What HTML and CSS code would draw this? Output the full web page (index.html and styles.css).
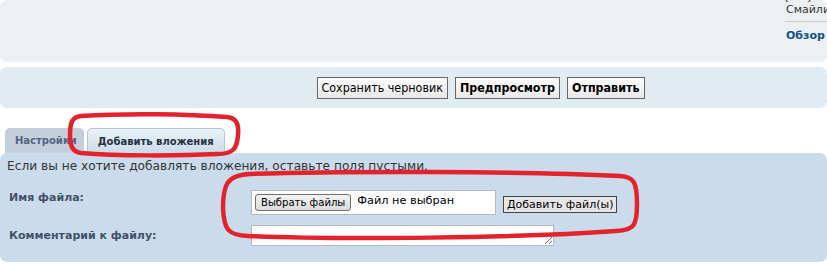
FILE: index.html
```html
<!DOCTYPE html>
<html lang="ru">
<head>
    <meta charset="UTF-8">
    <title>Ответить</title>
    <link rel="stylesheet" href="styles.css">
</head>
<body>
    <div class="panel top-panel">
        <div class="spacer"></div>
        <div class="side-col">
            <div class="cut-line">[ ... ]</div>
            <div class="smilies">Смайлики</div>
            <hr>
            <a href="#" class="review">Обзор</a>
        </div>
    </div>

    <div class="panel submit-panel">
        <input type="button" class="btn" value="Сохранить черновик">
        <input type="button" class="btn btn-bold" value="Предпросмотр">
        <input type="button" class="btn btn-bold" value="Отправить">
    </div>

    <div class="attach-area">
        <ul class="tabs">
            <li class="tab">Настройки</li>
            <li class="tab active">Добавить вложения</li>
        </ul>

        <div class="panel attach-panel">
            <p class="intro">Если вы не хотите добавлять вложения, оставьте поля пустыми.</p>
            <div class="fields">
                <label class="field-label">Имя файла:</label>
                <div class="file-row">
                    <div class="file-box">
                        <span class="file-btn">Выбрать файлы</span>
                        <span class="file-text">Файл не выбран</span>
                    </div>
                    <input type="button" class="add-btn" value="Добавить файл(ы)">
                </div>
                <label class="field-label label-comment">Комментарий к файлу:</label>
                <textarea class="comment" rows="1"></textarea>
            </div>
        </div>

        <!-- red marks drawn over the screenshot -->
        <svg class="mark mark-tab" width="176" height="48" viewBox="0 0 176 48">
            <path d="M14 5 C60 2 120 3 160 6 C170 7 172 14 171 24 C170 38 166 43 150 43 C110 45 50 45 14 42 C5 41 3 34 3 24 C3 12 5 6 14 5 Z" fill="none" stroke="#e3222b" stroke-width="4.5"/>
        </svg>
        <svg class="mark mark-file" width="424" height="76" viewBox="0 0 424 76">
            <path d="M30 6 C120 3 300 3 400 8 C414 9 417 14 417 36 C417 58 414 62 396 63 C300 70 120 72 28 68 C8 67 4 62 3 40 C3 18 6 7 30 6 Z" fill="none" stroke="#e3222b" stroke-width="4.5"/>
        </svg>
    </div>
</body>
</html>
```

FILE: styles.css
```css
html, body {
    overflow: hidden;
}

body {
    margin: 0;
    padding: 0;
    width: 827px;
    background: #fff;
    font-family: "DejaVu Sans", Verdana, sans-serif;
    color: #333;
}

.panel {
    border-radius: 7px;
}

/* top panel with the smilies column */
.top-panel {
    display: flex;
    height: 62px;
    background: #ecf0f3;
    overflow: hidden;
}

.spacer {
    flex: 1;
}

.side-col {
    flex: 0 0 42px;
    min-width: 0;
    white-space: nowrap;
    font-size: 11px;
}

.cut-line {
    margin-top: -10px;
    height: 13px;
    color: #333;
}

.smilies {
    color: #333;
    line-height: 13px;
    padding-left: 1px;
}

.side-col hr {
    margin: 5px 0 0;
    width: 60px;
    border: none;
    border-top: 1px solid #c5ccd2;
}

.review {
    display: block;
    margin-top: 7px;
    padding-left: 1px;
    font-weight: bold;
    color: #105289;
    text-decoration: none;
}

/* submit buttons */
.submit-panel {
    margin-top: 5px;
    height: 41px;
    background: #e1ebf2;
    display: flex;
    justify-content: center;
    align-items: center;
    gap: 7px;
    padding-left: 134px;
}

.btn {
    height: 22px;
    padding: 0 4px;
    border: 1px solid #666;
    border-radius: 0;
    background: linear-gradient(#fdfdfd, #e8e8e8);
    font-family: "DejaVu Sans Condensed", "DejaVu Sans", sans-serif;
    font-size: 12.4px;
    color: #000;
}

.btn-bold {
    font-weight: bold;
}

/* attachments */
.attach-area {
    position: relative;
    margin-top: 20px;
}

.tabs {
    list-style: none;
    margin: 0;
    padding: 0 0 0 5px;
    display: flex;
    gap: 3px;
    align-items: flex-end;
}

.tab {
    height: 25px;
    line-height: 25px;
    padding: 0 7px 0 10px;
    background: #c3d0dc;
    border-radius: 5px 5px 0 0;
    font-size: 10px;
    font-weight: bold;
    color: #536482;
}

.tab.active {
    padding: 0 10px;
    background: linear-gradient(#ecf2f7, #cadceb);
    border: 1px solid #b4c6d6;
    border-bottom: none;
    height: 24px;
    color: #28313f;
}

.attach-panel {
    border-top-left-radius: 7px;
    background: #cadceb;
    height: 109px;
    padding: 0 0 0 9px;
    overflow: hidden;
}

.intro {
    margin: 0 0 0 -2px;
    padding-top: 6px;
    font-size: 12.2px;
    line-height: 15px;
    color: #333;
}

.fields {
    display: grid;
    grid-template-columns: 242px auto;
    row-gap: 12px;
    margin-top: 16px;
    align-items: start;
}

.field-label {
    font-size: 11px;
    font-weight: bold;
    color: #425067;
    padding-top: 1px;
}

.label-comment {
    padding-top: 2px;
}

.file-row {
    display: flex;
    align-items: center;
    gap: 7px;
}

.file-box {
    width: 240px;
    height: 23px;
    background: #fff;
    border: 1px solid #b4bac0;
    display: flex;
    align-items: center;
    padding-left: 3px;
    gap: 6px;
}

.file-btn {
    height: 15px;
    line-height: 15px;
    padding: 0 5px;
    border: 1px solid #707070;
    border-radius: 3px;
    background: linear-gradient(#f2f2f2, #dcdcdc);
    font-family: "DejaVu Sans Condensed", "DejaVu Sans", sans-serif;
    font-size: 11.2px;
    color: #000;
}

.file-text {
    font-size: 11.3px;
    color: #000;
    margin-top: -4px;
}

.add-btn {
    height: 17px;
    padding: 0 3px;
    margin-top: 4px;
    border: 1px solid #444;
    border-radius: 0;
    background: #e6e6e6;
    font-family: "DejaVu Sans", sans-serif;
    font-size: 11px;
    line-height: 14px;
    color: #000;
}

.comment {
    width: 299px;
    height: 17px;
    padding: 1px;
    margin: -2px 0 0;
    border: 1px solid #b4bac0;
    background: #fff;
    resize: both;
}

.mark {
    position: absolute;
}

.mark-tab {
    left: 67px;
    top: -17px;
}

.mark-file {
    left: 220px;
    top: 40px;
}
```
